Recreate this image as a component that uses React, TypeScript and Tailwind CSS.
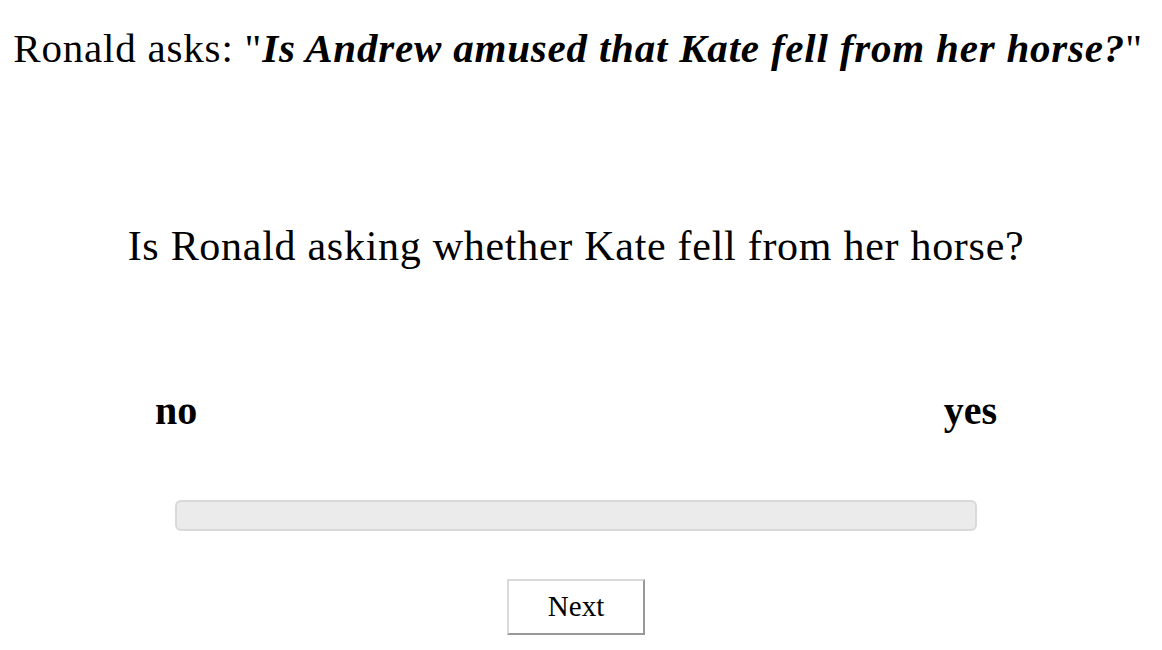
export default function App() {
  return (
    <div className="flex min-h-[650px] w-full flex-col items-center bg-white pr-[10px] text-black [font-family:'Liberation_Serif',serif]">
      {/* stimulus */}
      <p className="mt-[24px] ml-[4px] whitespace-nowrap text-[41px] leading-[48px] tracking-[0.8px]">
        Ronald asks: "<b className="italic">Is Andrew amused that Kate fell from her horse?</b>"
      </p>
      <p className="mt-[150px] whitespace-nowrap text-[42px] leading-[48px] tracking-[0.72px]">
        Is Ronald asking whether Kate fell from her horse?
      </p>

      {/* slider */}
      <div className="mt-[117px] flex w-[802px] flex-col">
        <div className="flex justify-between text-[40px] font-bold leading-[48px]">
          <span className="-ml-[20px]">no</span>
          <span className="-mr-[20px]">yes</span>
        </div>
        <div className="mt-[65px] h-[31px] w-full rounded-[6px] border-2 border-[#d9d9d9] bg-[#ebebeb]" />
      </div>

      <button className="mt-[48px] h-[56px] w-[138px] border-2 border-[#d9d9d9] border-r-[#999] border-b-[#999] bg-white text-[29px]">
        Next
      </button>
    </div>
  );
}
